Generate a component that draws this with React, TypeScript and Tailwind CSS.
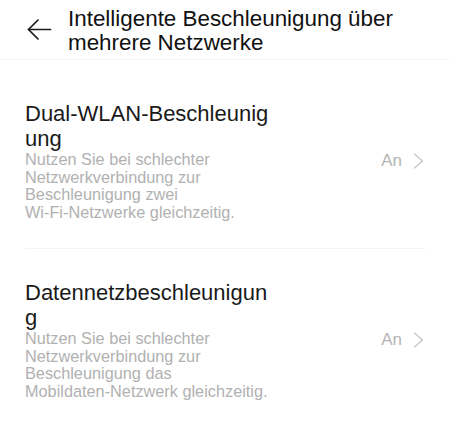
import React from 'react';

interface AccelOption {
  title: string[];
  description: string[];
  value: string;
}

const options: AccelOption[] = [
  {
    title: ['Dual-WLAN-Beschleunig', 'ung'],
    description: [
      'Nutzen Sie bei schlechter',
      'Netzwerkverbindung zur',
      'Beschleunigung zwei',
      'Wi-Fi-Netzwerke gleichzeitig.',
    ],
    value: 'An',
  },
  {
    title: ['Datennetzbeschleunigun', 'g'],
    description: [
      'Nutzen Sie bei schlechter',
      'Netzwerkverbindung zur',
      'Beschleunigung das',
      'Mobildaten-Netzwerk gleichzeitig.',
    ],
    value: 'An',
  },
];

const BackArrow: React.FC = () => (
  <svg width="25" height="23" viewBox="0 0 25 23" fill="none" stroke="#1a1a1a" strokeWidth="1.7" strokeLinecap="round" strokeLinejoin="round">
    <path d="M23.5 11.5H1.5" />
    <path d="M11 2l-9.5 9.5L11 21" />
  </svg>
);

const Chevron: React.FC = () => (
  <svg width="11" height="16" viewBox="0 0 11 16" fill="none" stroke="#c6c6c6" strokeWidth="1.3" strokeLinecap="round" strokeLinejoin="round">
    <path d="M1.5 1l8 7-8 7" />
  </svg>
);

const OptionRow: React.FC<{ option: AccelOption }> = ({ option }) => (
  <div className="flex items-center">
    <div className="flex-1 min-w-0">
      <div className="text-[22px] leading-[25px] text-[#1a1a1a]">
        {option.title.map((line) => (
          <div key={line}>{line}</div>
        ))}
      </div>
      <div className="text-[16.3px] leading-[17.7px] text-[#b1b1b1]">
        {option.description.map((line) => (
          <div key={line}>{line}</div>
        ))}
      </div>
    </div>
    <div className="flex items-center gap-[11px] pr-[1px]">
      <span className="text-[17px] leading-[20px] text-[#b5b5b5]">{option.value}</span>
      <Chevron />
    </div>
  </div>
);

export default function App() {
  return (
    <div className="w-[450px] h-[444px] bg-white overflow-hidden" style={{ fontFamily: '"Liberation Sans", Arial, sans-serif' }}>
      {/* Header */}
      <div className="flex items-start h-[60px] border-b border-[#f5f5f5]">
        <div className="pl-[27px] pt-[18px] w-[68px]">
          <BackArrow />
        </div>
        <h1 className="pt-[7px] text-[22.4px] leading-[24px] text-[#111]">
          Intelligente Beschleunigung über
          <br />
          mehrere Netzwerke
        </h1>
      </div>

      <div className="px-[25px]">
        <div className="pt-[41px] pb-[26px] border-b border-[#f3f3f3]">
          <OptionRow option={options[0]} />
        </div>
        <div className="pt-[31px]">
          <OptionRow option={options[1]} />
        </div>
      </div>
    </div>
  );
}
